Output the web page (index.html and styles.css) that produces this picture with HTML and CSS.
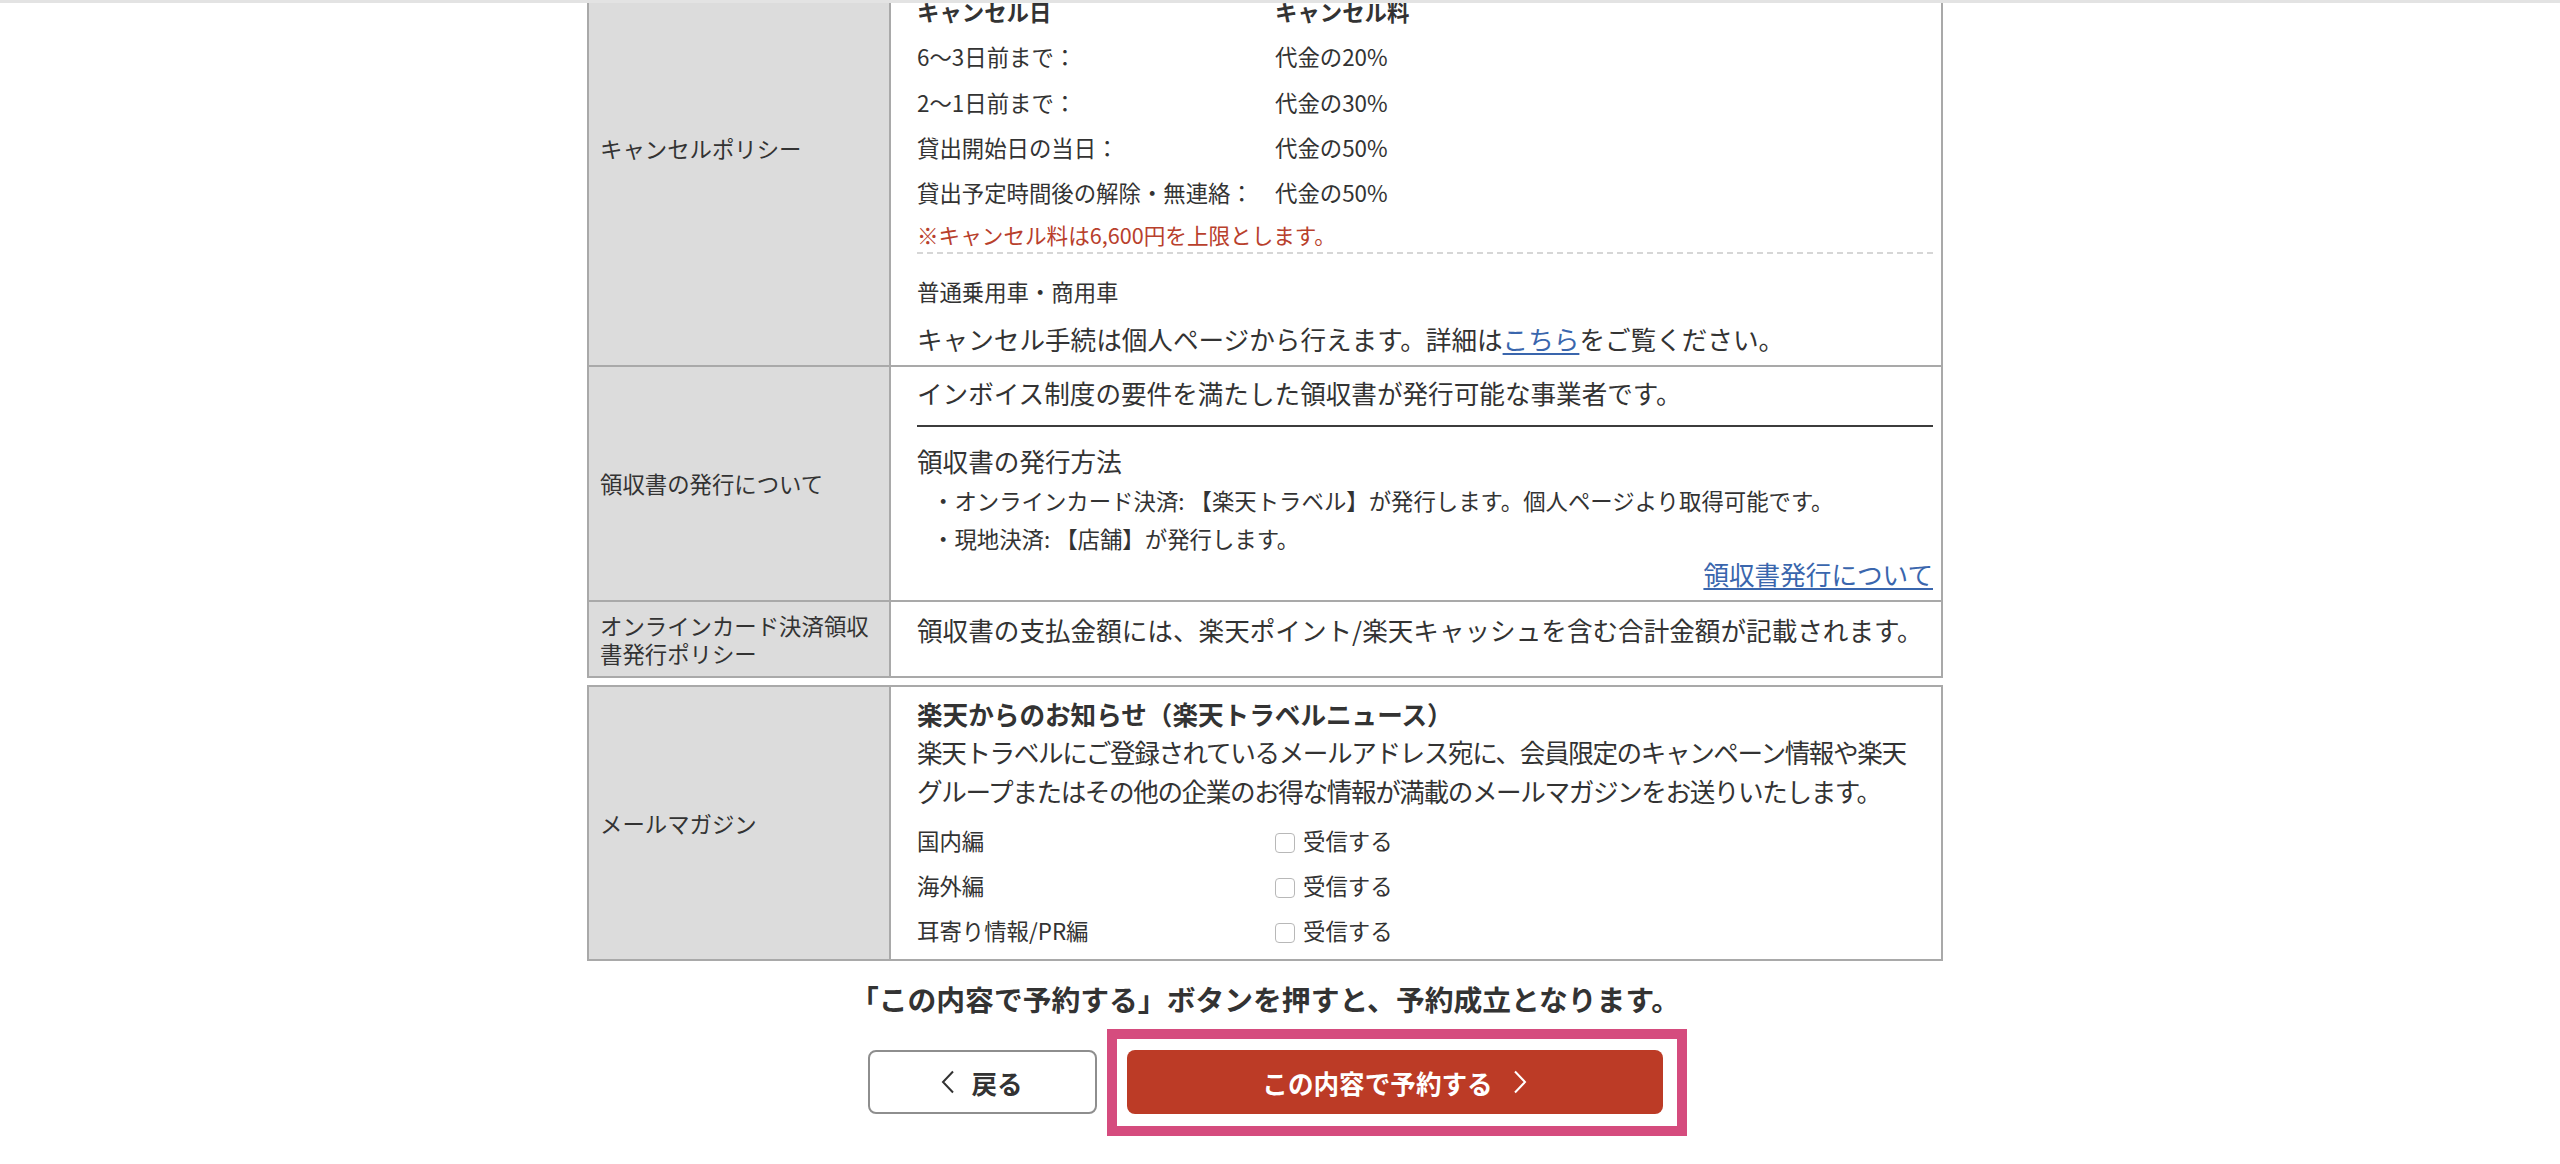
FILE: index.html
```html
<!DOCTYPE html>
<html lang="ja">
<head>
<meta charset="utf-8">
<title>予約内容の確認</title>
<link rel="stylesheet" href="styles.css">
</head>
<body>
<div class="topbar"></div>
<main class="page">
  <section class="info">
    <div class="row">
      <div class="label">キャンセルポリシー</div>
      <div class="value cancel">
        <div class="fee-grid">
          <span class="fee-h">キャンセル日</span><span class="fee-h">キャンセル料</span>
          <span>6〜3日前まで：</span><span>代金の20%</span>
          <span>2〜1日前まで：</span><span>代金の30%</span>
          <span>貸出開始日の当日：</span><span>代金の50%</span>
          <span>貸出予定時間後の解除・無連絡：</span><span>代金の50%</span>
        </div>
        <p class="note">※キャンセル料は6,600円を上限とします。</p>
        <div class="proc">
          <p class="proc-type">普通乗用車・商用車</p>
          <p class="proc-text">キャンセル手続は個人ページから行えます。詳細は<a href="#" class="link">こちら</a>をご覧ください。</p>
        </div>
      </div>
    </div>
    <div class="row">
      <div class="label">領収書の発行について</div>
      <div class="value receipt">
        <p class="txt">インボイス制度の要件を満たした領収書が発行可能な事業者です。</p>
        <div class="rule"></div>
        <p class="txt">領収書の発行方法</p>
        <ul class="methods">
          <li>・オンラインカード決済: 【楽天トラベル】が発行します。個人ページより取得可能です。</li>
          <li>・現地決済: 【店舗】が発行します。</li>
        </ul>
        <p class="more"><a href="#" class="link">領収書発行について</a></p>
      </div>
    </div>
    <div class="row">
      <div class="label">オンラインカード決済領収書発行ポリシー</div>
      <div class="value policy">
        <p class="txt">領収書の支払金額には、楽天ポイント/楽天キャッシュを含む合計金額が記載されます。</p>
      </div>
    </div>
  </section>

  <section class="info mail">
    <div class="row">
      <div class="label">メールマガジン</div>
      <div class="value mag">
        <p class="mag-title">楽天からのお知らせ（楽天トラベルニュース）</p>
        <p class="mag-text">楽天トラベルにご登録されているメールアドレス宛に、会員限定のキャンペーン情報や楽天<br>グループまたはその他の企業のお得な情報が満載のメールマガジンをお送りいたします。</p>
        <div class="opt-grid">
          <span>国内編</span><label class="opt"><input type="checkbox" class="chk"><span>受信する</span></label>
          <span>海外編</span><label class="opt"><input type="checkbox" class="chk"><span>受信する</span></label>
          <span>耳寄り情報/PR編</span><label class="opt"><input type="checkbox" class="chk"><span>受信する</span></label>
        </div>
      </div>
    </div>
  </section>

  <p class="notice">「この内容で予約する」ボタンを押すと、予約成立となります。</p>

  <div class="actions">
    <button type="button" class="btn btn-back">
      <svg class="chev" width="14" height="24" viewBox="0 0 14 24" aria-hidden="true"><polyline points="12,1.5 2,12 12,22.5" fill="none" stroke="#333" stroke-width="2"/></svg>
      <span>戻る</span>
    </button>
    <div class="reserve-wrap">
      <button type="button" class="btn btn-reserve">
        <span>この内容で予約する</span>
        <svg class="chev" width="14" height="24" viewBox="0 0 14 24" aria-hidden="true"><polyline points="2,1.5 12,12 2,22.5" fill="none" stroke="#fff" stroke-width="2"/></svg>
      </button>
      <div class="highlight"></div>
    </div>
  </div>
</main>
</body>
</html>
```

FILE: styles.css
```css
* { box-sizing: border-box; }

html, body { margin: 0; padding: 0; }

body {
  font-family: "Noto Sans CJK JP", "Noto Sans", sans-serif;
  color: #333;
  background: #fff;
  padding-right: 30px;
}

p { margin: 0; }

.topbar {
  position: fixed;
  top: 0;
  left: 0;
  right: 0;
  height: 3px;
  background: #e3e3e3;
  z-index: 10;
}

.page {
  width: 1356px;
  margin: -72px auto 0;
}

.info {
  border: 2px solid #a9a9a9;
}

.info.mail {
  margin-top: 7px;
}

.row {
  display: grid;
  grid-template-columns: 302px 1fr;
}

.row + .row {
  border-top: 2px solid #a9a9a9;
}

.label {
  background: #dcdcdc;
  border-right: 2px solid #a9a9a9;
  padding: 9px 11px;
  font-size: 22.4px;
  line-height: 28px;
  display: flex;
  align-items: center;
}

.value {
  padding: 8px 8px 7px 26px;
  font-size: 25.6px;
  line-height: 38.4px;
}

.link {
  color: #3a66ad;
  text-decoration: underline;
  text-underline-offset: 3px;
}

/* cancel policy */
.value.cancel {
  padding-top: 59px;
}

.fee-grid {
  display: grid;
  grid-template-columns: 358px 1fr;
  grid-auto-rows: 45.33px;
  align-items: center;
  font-size: 22.4px;
  line-height: 1.4;
}

.fee-h {
  font-weight: 700;
}

.note {
  margin-top: 3px;
  font-size: 21.6px;
  line-height: 32px;
  color: #b8402c;
}

.proc {
  margin-top: 1px;
  border-top: 2px dashed #d6d6d6;
  padding-top: 19px;
}

.proc-type {
  font-size: 22.4px;
  line-height: 36px;
}

.proc-text {
  margin-top: 11px;
}

/* receipt */
.value.receipt {
  padding-top: 7px;
  padding-bottom: 9px;
}

.rule {
  border-top: 2px solid #3c3c3c;
  margin: 13px 0 15px;
}

.methods {
  list-style: none;
  margin: 0;
  padding: 0 0 0 15px;
  font-size: 22.4px;
  line-height: 38px;
}

.more {
  text-align: right;
  line-height: 34px;
}

.value.policy {
  padding-top: 9px;
}

/* mail magazine */
.value.mag {
  padding: 8px 0 6px 26px;
}

.mag-title {
  font-weight: 700;
}

.mag-text {
  letter-spacing: -1.4px;
  white-space: nowrap;
}

.opt-grid {
  margin-top: 8px;
  display: grid;
  grid-template-columns: 358px 1fr;
  grid-auto-rows: 45px;
  align-items: center;
  font-size: 22.4px;
  line-height: 1.4;
}

.opt {
  display: flex;
  align-items: center;
  gap: 8px;
}

.chk {
  -webkit-appearance: none;
  appearance: none;
  margin: 4px 0 0;
  width: 20px;
  height: 20px;
  border: 1.5px solid #b8b8b8;
  border-radius: 4px;
  background: #fff;
}

/* notice & buttons */
.notice {
  margin-top: 16px;
  text-align: center;
  font-size: 28.8px;
  line-height: 43.2px;
  font-weight: 700;
}

.actions {
  margin-top: 30px;
  display: flex;
  justify-content: center;
  gap: 30px;
  padding-bottom: 40px;
}

.btn {
  font-family: inherit;
  height: 64px;
  border-radius: 8px;
  display: flex;
  align-items: center;
  justify-content: center;
  font-size: 25.6px;
  font-weight: 700;
  cursor: pointer;
}

.btn-back {
  width: 229px;
  background: #fff;
  border: 2px solid #8e8e8e;
  color: #333;
  gap: 16px;
}

.reserve-wrap {
  position: relative;
}

.btn-reserve {
  width: 536px;
  background: #bc3b26;
  border: none;
  color: #fff;
  gap: 20px;
}

.highlight {
  position: absolute;
  top: -21px;
  left: -20px;
  right: -24px;
  bottom: -22px;
  border: 10px solid #d54c7e;
  pointer-events: none;
}
```
